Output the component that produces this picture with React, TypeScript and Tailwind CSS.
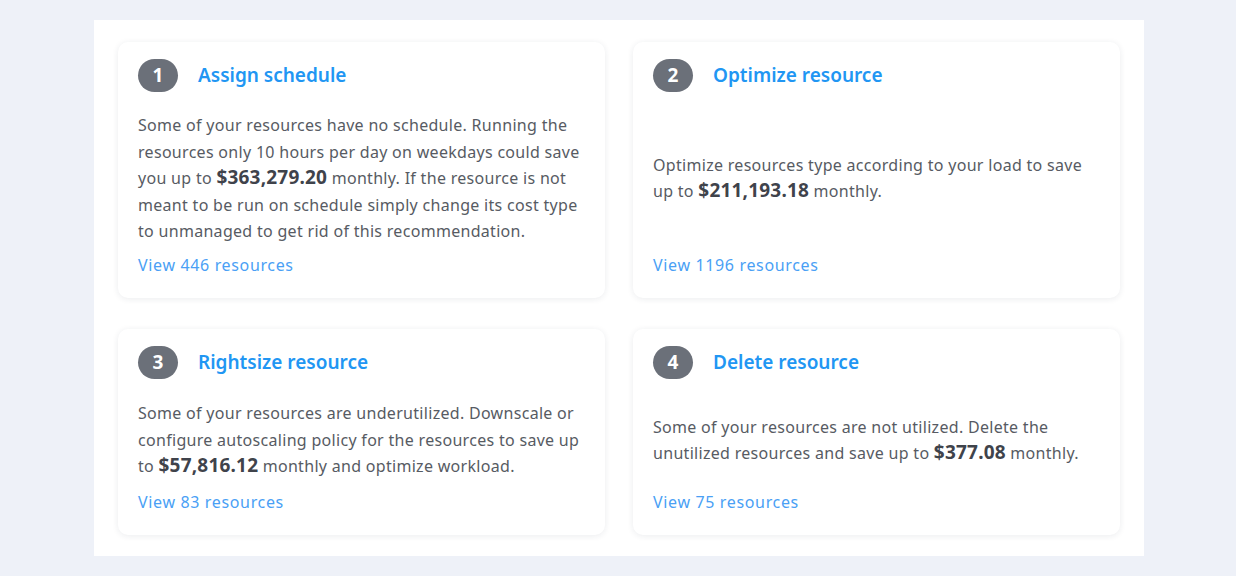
import React from "react";

type Rec = {
  n: number;
  title: string;
  before: string;
  amount: string;
  after: string;
  count: number;
};

const recs: Rec[] = [
  {
    n: 1,
    title: "Assign schedule",
    before:
      "Some of your resources have no schedule. Running the resources only 10 hours per day on weekdays could save you up to ",
    amount: "$363,279.20",
    after:
      " monthly. If the resource is not meant to be run on schedule simply change its cost type to unmanaged to get rid of this recommendation.",
    count: 446,
  },
  {
    n: 2,
    title: "Optimize resource",
    before: "Optimize resources type according to your load to save up to ",
    amount: "$211,193.18",
    after: " monthly.",
    count: 1196,
  },
  {
    n: 3,
    title: "Rightsize resource",
    before:
      "Some of your resources are underutilized. Downscale or configure autoscaling policy for the resources to save up to ",
    amount: "$57,816.12",
    after: " monthly and optimize workload.",
    count: 83,
  },
  {
    n: 4,
    title: "Delete resource",
    before: "Some of your resources are not utilized. Delete the unutilized resources and save up to ",
    amount: "$377.08",
    after: " monthly.",
    count: 75,
  },
];

function Card({ r }: { r: Rec }) {
  return (
    <div className="flex min-h-[206px] flex-col rounded-[10px] bg-white pl-5 pr-[17px] pt-[17px] pb-[22px] shadow-[0_1px_6px_rgba(30,40,70,0.09)]">
      <div className="flex h-[33px] items-center gap-5">
        <div className="flex h-[33px] w-[40px] items-center justify-center rounded-full bg-[#6b7079] text-[19px] font-bold leading-none text-white">
          {r.n}
        </div>
        <div className="text-[19px] font-semibold leading-none text-[#2196f3]">{r.title}</div>
      </div>
      <div className="flex flex-1 items-center pt-5 pb-[9px]">
        <p className="text-[16px] leading-[26.5px] tracking-[0.3px] text-[#575b63]">
          {r.before}
          <span className="text-[19px] font-bold leading-none tracking-[0.2px] text-[#3f434b]">{r.amount}</span>
          {r.after}
        </p>
      </div>
      <a className="text-[16px] leading-[22px] tracking-[0.65px] text-[#4a9ff5]" href="#">
        View {r.count} resources
      </a>
    </div>
  );
}

export default function App() {
  return (
    <div className="min-h-[576px] bg-[#eef1f8] pt-5 pb-5 font-['Noto_Sans',sans-serif]">
      <div className="ml-[94px] w-[1050px] bg-white px-6 pt-[22px] pb-[21px]">
        <div className="grid grid-cols-2 gap-x-[28px] gap-y-[31px]">
          {recs.map((r) => (
            <Card key={r.n} r={r} />
          ))}
        </div>
      </div>
    </div>
  );
}
